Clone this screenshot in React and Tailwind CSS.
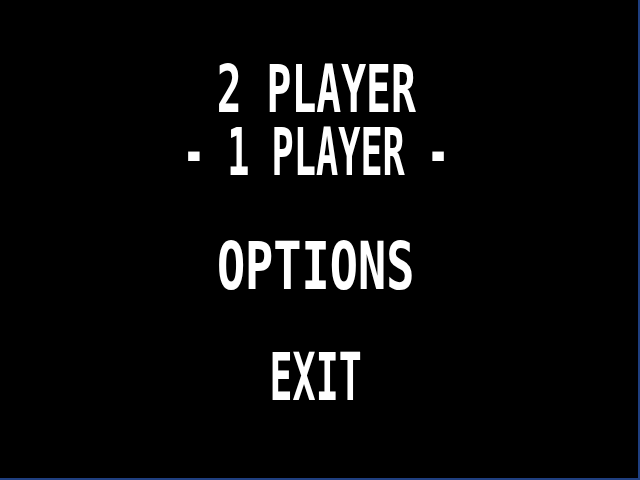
export default function App() {
  return (
    <div className="w-[640px] h-[480px] bg-black border-r-2 border-b-2 border-[#1f3f80] overflow-hidden">
      <div className="flex flex-col items-center pt-[61px] pr-[6px] text-white font-['DejaVu_Sans_Mono',monospace] font-bold text-[62px] leading-[58px] whitespace-pre">
        <div className="scale-x-[0.667] scale-y-[1.065]">2 PLAYER</div>
        <div className="mt-[5px] scale-x-[0.595] scale-y-[1.065]">- 1 PLAYER -</div>
        <div className="mt-[56px] scale-x-[0.756] scale-y-[1.065]">OPTIONS</div>
        <div className="mt-[53px] scale-x-[0.617] scale-y-[1.065]">EXIT</div>
      </div>
    </div>
  );
}
